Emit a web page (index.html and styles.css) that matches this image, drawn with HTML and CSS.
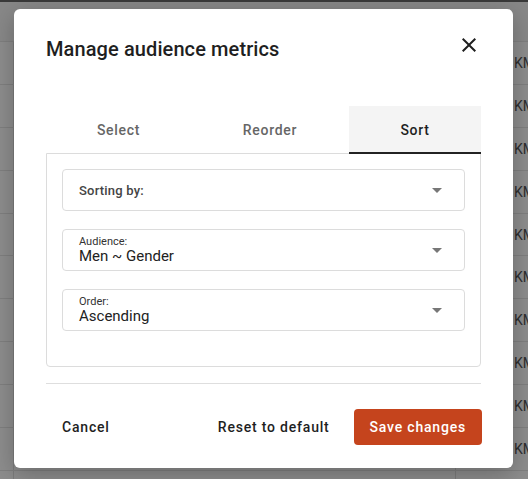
FILE: index.html
```html
<!DOCTYPE html>
<html>
<head>
<meta charset="utf-8">
<link rel="stylesheet" href="styles.css">
</head>
<body>
<div class="page">
  <div class="row head"></div>
  <div class="row"><span class="cell">KM</span></div>
  <div class="row"><span class="cell">KM</span></div>
  <div class="row"><span class="cell">KM</span></div>
  <div class="row"><span class="cell">KM</span></div>
  <div class="row"><span class="cell">KM</span></div>
  <div class="row"><span class="cell">KM</span></div>
  <div class="row"><span class="cell">KM</span></div>
  <div class="row"><span class="cell">KM</span></div>
  <div class="row"><span class="cell">KM</span></div>
  <div class="row"><span class="cell">KM</span></div>
</div>

<div class="modal">
  <div class="modal-head">
    <h1 class="title">Manage audience metrics</h1>
    <svg class="close" viewBox="0 0 24 24" width="24" height="24"><path d="M19 6.41 17.59 5 12 10.59 6.41 5 5 6.41 10.59 12 5 17.59 6.41 19 12 13.41 17.59 19 19 17.59 13.41 12z" fill="#1f1f1f"/></svg>
  </div>

  <div class="tabs">
    <div class="tab tab-select">Select</div>
    <div class="tab tab-reorder">Reorder</div>
    <div class="tab tab-sort active">Sort</div>
  </div>

  <div class="panel">
    <div class="select">
      <div class="select-text"><span class="placeholder">Sorting by:</span></div>
      <svg class="arrow" viewBox="0 0 24 24" width="24" height="24"><path d="M7 10l5 5 5-5z" fill="#777"/></svg>
    </div>
    <div class="select">
      <div class="select-text"><span class="label">Audience:</span><span class="value">Men ~ Gender</span></div>
      <svg class="arrow" viewBox="0 0 24 24" width="24" height="24"><path d="M7 10l5 5 5-5z" fill="#777"/></svg>
    </div>
    <div class="select">
      <div class="select-text"><span class="label">Order:</span><span class="value">Ascending</span></div>
      <svg class="arrow" viewBox="0 0 24 24" width="24" height="24"><path d="M7 10l5 5 5-5z" fill="#777"/></svg>
    </div>
  </div>

  <div class="divider"></div>

  <div class="footer">
    <button class="btn text">Cancel</button>
    <div class="footer-right">
      <button class="btn text">Reset to default</button>
      <button class="btn primary">Save changes</button>
    </div>
  </div>
</div>
</body>
</html>
```

FILE: styles.css
```css
* { box-sizing: border-box; }
html, body { margin: 0; padding: 0; }
body {
  width: 528px;
  height: 479px;
  overflow: hidden;
  background: #8c8c8c;
  font-family: Roboto, "Noto Sans", Arial, sans-serif;
  position: relative;
}

.page {
  border-top: 2px solid #3a3a3a;
  background:
    linear-gradient(#7c7c7c, #7c7c7c) 13px 0 / 1px 100% no-repeat,
    linear-gradient(#7c7c7c, #7c7c7c) 455px 0 / 1px 100% no-repeat,
    #8d8d8d;
  height: 479px;
  overflow: hidden;
}
.row {
  height: 42.9px;
  border-bottom: 1px solid #7f7f7f;
  display: flex;
  align-items: center;
  overflow: hidden;
}
.row.head { height: 40px; background: #888; }
.cell {
  margin-left: 514px;
  font-size: 14px;
  color: #2e2e2e;
  white-space: nowrap;
}

.modal {
  position: absolute;
  left: 14px;
  top: 9px;
  width: 499px;
  height: 459px;
  background: #fff;
  border-radius: 6px;
  box-shadow: 0 6px 24px rgba(0,0,0,0.25);
  padding: 24px 32px 0 32px;
  display: flex;
  flex-direction: column;
}

.modal-head {
  display: flex;
  justify-content: space-between;
  align-items: flex-start;
  height: 30px;
}
.title {
  margin: 2px 0 0 0;
  font-size: 20px;
  line-height: 28px;
  font-weight: 500;
  color: #1f1f1f;
  letter-spacing: 0.1px;
}
.close { display: block; margin-top: 0; }

.tabs {
  margin-top: 43px;
  display: grid;
  grid-template-columns: 145px 158px 1fr;
  height: 48px;
  position: relative;
  z-index: 1;
}
.tab {
  display: flex;
  align-items: center;
  justify-content: center;
  font-size: 14px;
  font-weight: 500;
  letter-spacing: 0.7px;
  color: #666;
}
.tab.active {
  background: #f4f4f4;
  color: #1f1f1f;
  border-bottom: 2px solid #222;
  padding-top: 2px;
}

.panel {
  margin-top: -1px;
  border: 1px solid #dcdcdc;
  border-radius: 0 0 4px 4px;
  padding: 15px 15px 35px 15px;
  display: flex;
  flex-direction: column;
  gap: 18px;
}
.select {
  height: 42px;
  border: 1px solid #dcdcdc;
  border-radius: 4px;
  display: flex;
  align-items: center;
  justify-content: space-between;
  padding: 0 15px 0 16px;
}
.select-text { display: flex; flex-direction: column; }
.placeholder {
  font-size: 13px;
  font-weight: 500;
  color: #444;
  letter-spacing: 0.2px;
}
.label {
  font-size: 11px;
  line-height: 12px;
  color: #333;
}
.value {
  font-size: 15px;
  line-height: 17px;
  color: #222;
}
.arrow { display: block; margin-top: -1px; }

.divider {
  margin-top: 16px;
  height: 1px;
  background: #dedede;
}

.footer {
  margin-top: 25px;
  display: flex;
  justify-content: space-between;
  align-items: center;
}
.footer-right { display: flex; gap: 8px; margin-right: -1px; }
.btn {
  font-family: Roboto, "Noto Sans", Arial, sans-serif;
  font-size: 14px;
  font-weight: 500;
  letter-spacing: 0.8px;
  height: 36px;
  padding: 0 16px;
  border: none;
  border-radius: 4px;
  background: transparent;
  color: #1f1f1f;
}
.btn.primary {
  background: #c5441d;
  color: #fff;
}
```
